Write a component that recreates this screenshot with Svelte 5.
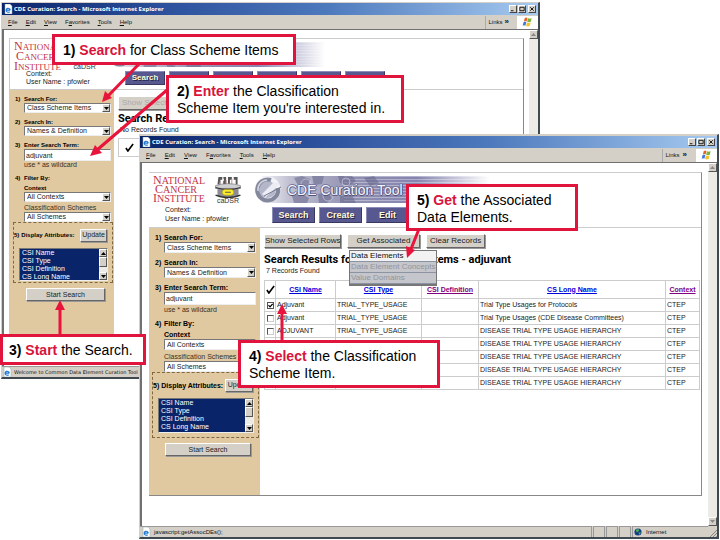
<script>
  const title = 'CDE Curation: Search - Microsoft Internet Explorer';
  const menus = ['File', 'Edit', 'View', 'Favorites', 'Tools', 'Help'];
  const nav = ['Search', 'Create', 'Edit', 'Options', 'Help', 'Logout'];
  const attributes = ['CSI Name', 'CSI Type', 'CSI Definition', 'CS Long Name'];
  const hierarchy = 'DISEASE TRIAL TYPE USAGE HIERARCHY';
  const rows = [
    { name: 'Adjuvant', long: 'Trial Type Usages for Protocols', checked: true },
    { name: 'Adjuvant', long: 'Trial Type Usages (CDE Disease Committees)' },
    { name: 'ADJUVANT', long: hierarchy },
    { name: 'ADJUVANT', long: hierarchy },
    { name: 'ADJUVANT', long: hierarchy },
    { name: 'ADJUVANT', long: hierarchy },
    { name: 'ADJUVANT', long: hierarchy }
  ];
</script>

{#snippet ieIcon()}
  <svg class="ie" viewBox="0 0 9 10" aria-hidden="true">
    <path d="M1 0h5l2 2v8H1z" fill="#fff" stroke="#8aa" stroke-width=".5" />
    <path d="M6.2 6.2H2.4M6.2 6.2A2 2 0 1 0 5.6 7.7" fill="none" stroke="#1c78d0" stroke-width="1.2" />
  </svg>
{/snippet}

{#snippet tick()}
  <svg class="tick" viewBox="0 0 10 10" aria-label="Select all"><path d="M1 5.5l2.2 3.4L9 1" fill="none" stroke="#000" stroke-width="1.8" /></svg>
{/snippet}

{#snippet dropdown(id, value)}
  <div class="drop">
    <select {id}><option>{value}</option></select>
    <span class="arrow"><svg viewBox="0 0 5 3"><path d="M0 0h5L2.5 3z" /></svg></span>
  </div>
{/snippet}

{#snippet banner()}
  <div class="banner">
    <svg class="art" viewBox="0 0 236 27" preserveAspectRatio="none" aria-hidden="true">
      <defs>
        <linearGradient id="fade">
          <stop offset="0" stop-color="#f2f2f8" />
          <stop offset=".12" stop-color="#c0c0d2" />
          <stop offset=".4" stop-color="#9090b2" />
          <stop offset=".68" stop-color="#8484b0" />
          <stop offset="1" stop-color="#fff" />
        </linearGradient>
        <pattern id="lines" width="4" height="3" patternUnits="userSpaceOnUse"><path d="M0 .5h4" stroke="#fff" stroke-opacity=".35" /></pattern>
      </defs>
      <path d="M8 0h228v27H8z" fill="url(#fade)" />
      <path d="M90 0h146v27H90z" fill="url(#lines)" />
      <g fill="#66668c" opacity=".55">
        <path d="M40 2l8-2 8 3-2 7-9 1zM58 0h12l-2 8-8 1zM84 0h14l4 5-7 5-9-3zM110 2l10-2 5 7-9 3z" />
        <path d="M38 20l9-3 8 5-2 5H40zM64 18l9-2 5 6-5 5h-8zM86 20l12-1 4 8H86z" />
      </g>
      <g fill="none" stroke="#d8d8e8" opacity=".6"><circle cx="52" cy="8" r="5" /><circle cx="74" cy="20" r="5" /><circle cx="92" cy="6" r="4" /></g>
      <circle cx="13.500" cy="13.500" r="13" fill="#f4f4f8" />
      <circle cx="13.500" cy="13.500" r="8.500" fill="#b4b6ca" />
      <path d="M17 4A10.500 10.500 0 1 0 24 12" fill="none" stroke="#84889c" stroke-width="4" />
      <path d="M8 18L20 6l6 2-14 13z" fill="#ececf4" />
      <path d="M10 20L27 11" stroke="#74788c" />
      <path d="M4 15a9.500 9.500 0 0 1 9-11" fill="none" stroke="#d0d2de" stroke-width="1.500" />
    </svg>
    <strong>CDE Curation Tool</strong>
  </div>
{/snippet}

{#snippet masthead()}
  <header class="mast">
    <div class="identity">
      <div class="logos">
        <div class="nci"><span><b>N</b>ATIONAL</span><span class="mid"><b>C</b>ANCER</span><span><b>I</b>NSTITUTE</span></div>
        <div class="cadsr">
          <svg viewBox="0 0 28 23" aria-hidden="true">
            <path d="M4 1h4v3H6v5H3zM9 1h3v8H9V5h1zM14 1h4v3h-2v5h-2zM20 1h4v8h-2V4h-2z" fill="#555" />
            <path d="M5 9l1-4M12 10V4M18 9V3" stroke="#b88" />
            <path d="M1 10q13-4 26 0v3H1z" fill="#cfcfd4" stroke="#777" stroke-width=".7" />
            <path d="M3 13h22v8q-11 4-22 0z" fill="#8c8c94" />
            <path d="M1 12q13 4 26 0" fill="none" stroke="#333" stroke-width="1.300" />
            <path d="M1 20q13 5 26 0" fill="none" stroke="#333" stroke-width="1.500" />
            <rect x="8" y="14" width="12" height="6" rx="3" fill="#ffec2c" stroke="#a89a10" stroke-width=".6" />
            <path d="M11 17h6" stroke="#554" />
          </svg>
          <span>caDSR</span>
        </div>
      </div>
      <p>Context:<br />User Name : pfowler</p>
    </div>
    <div class="brand">
      {@render banner()}
      <nav>{#each nav as item}<button>{item}</button>{/each}</nav>
    </div>
  </header>
{/snippet}

{#snippet sidebar(key)}
  <aside>
    <div class="step">
      <b>1)</b><label for="{key}-for">Search For:</label>
      {@render dropdown(`${key}-for`, 'Class Scheme Items')}
    </div>
    <div class="step">
      <b>2)</b><label for="{key}-in">Search In:</label>
      {@render dropdown(`${key}-in`, 'Names & Definition')}
    </div>
    <div class="step">
      <b>3)</b><label for="{key}-term">Enter Search Term:</label>
      <input id="{key}-term" type="text" value="adjuvant" />
      <small>use * as wildcard</small>
    </div>
    <div class="step">
      <b>4)</b><b>Filter By:</b>
      <label class="sub" for="{key}-ctx">Context</label>
      {@render dropdown(`${key}-ctx`, 'All Contexts')}
      <label class="sub light" for="{key}-cls">Classification Schemes</label>
      {@render dropdown(`${key}-cls`, 'All Schemes')}
    </div>
    <div class="display">
      <div class="row"><b>5)</b><label for="{key}-attr">Display Attributes:</label><button class="btn">Update</button></div>
      <div class="list">
        <select id="{key}-attr" multiple size="4">
          {#each attributes as item}<option selected>{item}</option>{/each}
        </select>
        <span class="bar">
          <span class="arrow"><svg viewBox="0 0 5 3"><path d="M0 3h5L2.5 0z" /></svg></span>
          <span class="arrow thumb"></span>
          <span class="arrow end"><svg viewBox="0 0 5 3"><path d="M0 0h5L2.5 3z" /></svg></span>
        </span>
      </div>
    </div>
    <button class="btn start">Start Search</button>
  </aside>
{/snippet}

{#snippet browser(key, status, main)}
  <section class="window {key}">
    <div class="titlebar">
      {@render ieIcon()}<strong>{title}</strong>
      <button aria-label="Minimize"><svg viewBox="0 0 7 7"><path d="M1 5.5h3" /></svg></button>
      <button aria-label="Maximize"><svg viewBox="0 0 7 7"><path d="M1 1.500h5v4H1z" /></svg></button>
      <button class="close" aria-label="Close"><svg viewBox="0 0 7 7"><path d="M1.500 1.500l4 4m0-4l-4 4" /></svg></button>
    </div>
    <div class="menubar">
      {#each menus as item}
        {@const at = item === 'Favorites' ? 1 : 0}
        <span>{item.slice(0, at)}<u>{item[at] ?? ''}</u>{item.slice(at + 1)}</span>
      {/each}
      <span class="links">Links</span><b>»</b>
      <span class="flag"><svg viewBox="0 0 12 11">
        <path d="M3 1q2-1 3 0L5 5Q3.500 4 2 5z" fill="#e8622c" /><path d="M6.600 1.300q2 1 4 0l-1 4q-2 1-4 0z" fill="#78b43c" />
        <path d="M1.700 5.600q1.600-1 3 0l-1 4q-1.500-1-3 0z" fill="#3c78dc" /><path d="M5.400 6q2 1 4 0l-1 4q-2 1-4 0z" fill="#f4c428" />
      </svg></span>
    </div>
    <div class="viewport">
      <div class="page">
        {@render masthead()}
        <div class="body">{@render sidebar(key)}{@render main()}</div>
      </div>
      <span class="scroll">
        <span class="arrow"><svg viewBox="0 0 5 3"><path d="M0 3h5L2.5 0z" /></svg></span>
        <span class="arrow end"><svg viewBox="0 0 5 3"><path d="M0 0h5L2.5 3z" /></svg></span>
      </span>
    </div>
    <footer>
      <span class="msg">{@render ieIcon()}{status}</span><i></i><i></i><i></i>
      <span class="zone"><svg viewBox="0 0 9 9"><circle cx="4.500" cy="4.500" r="4" fill="#123c8c" /><path d="M2 2l3-1 1 2-3 2zM5 5l3 0-2 3z" fill="#4cb04c" /></svg>Internet</span>
      <svg class="grip" viewBox="0 0 8 8"><path d="M8 1L1 8M8 4L4 8M8 7L7 8" stroke="#888" /></svg>
    </footer>
  </section>
{/snippet}

{#snippet emptyMain()}
  <main>
    <div class="tools"><button class="btn" disabled>Show Selected Rows</button></div>
    <h1>Search Results for Class Scheme Items</h1>
    <p class="count">No Records Found</p>
    <table><thead><tr><th class="pick">{@render tick()}</th><th></th></tr></thead></table>
  </main>
{/snippet}

{#snippet resultsMain()}
  <main>
    <div class="tools">
      <button class="btn wide">Show Selected Rows</button>
      <div class="assoc">
        <button class="btn">Get Associated</button>
        <div class="popup">
          <button>Data Elements</button>
          <button disabled>Data Element Concepts</button>
          <button disabled>Value Domains</button>
        </div>
      </div>
      <button class="btn">Clear Records</button>
    </div>
    <h1>Search Results for Class Scheme Items - adjuvant</h1>
    <p class="count">7 Records Found</p>
    <table>
      <thead>
        <tr>
          <th class="pick">{@render tick()}</th>
          <th class="name"><a href="#name">CSI Name</a></th>
          <th class="type"><a href="#type">CSI Type</a></th>
          <th class="def"><a class="seen" href="#def">CSI Definition</a></th>
          <th><a href="#long">CS Long Name</a></th>
          <th class="ctx"><a class="seen" href="#ctx">Context</a></th>
        </tr>
      </thead>
      <tbody>
        {#each rows as row, i}
          <tr>
            <td class="pick"><input type="checkbox" checked={row.checked} aria-label="Select row {i + 1}" /></td>
            <td>{row.name}</td><td>TRIAL_TYPE_USAGE</td><td></td><td>{row.long}</td><td>CTEP</td>
          </tr>
        {/each}
      </tbody>
    </table>
  </main>
{/snippet}

<div class="desk">
  {@render browser('back', 'Welcome to Common Data Element Curation Tool', emptyMain)}
  {@render browser('front', 'javascript:getAssocDEs();', resultsMain)}

  <p class="note n1"><b>1) <em>Search</em></b> for Class Scheme Items</p>
  <svg class="arrows" width="720" height="540" aria-hidden="true">
    <g stroke="#e8143c" stroke-width="3">
      <path d="M139 64L108 96M167 90L97 150M60 336V308M282 341V311M419 229L411 249" />
    </g>
    <g fill="#e8143c">
      <path d="M102 102l3-11 7 7zM90 156l5-11 7 8zM60 300l-5 10h10zM282 304l-5 10h10zM407 258l-1-12 9 4z" />
    </g>
  </svg>
  <p class="note n2"><b>2) <em>Enter</em></b> the Classification<br />Scheme Item you're interested in.</p>
  <p class="note n3"><b>3) <em>Start</em></b> the Search.</p>
  <p class="note n4"><b>4) <em>Select</em></b> the Classification<br />Scheme Item.</p>
  <p class="note n5"><b>5) <em>Get</em></b> the Associated<br />Data Elements.</p>
</div>

<style>
  .desk, .desk * { box-sizing: border-box; }
  .desk { position: relative; min-height: 100vh; overflow: hidden; background: #fff; color: #222; font: 7px/9px "Liberation Sans", Arial, sans-serif; }
  p, h1 { margin: 0; }
  button, input, select { font: inherit; color: inherit; margin: 0; padding: 0; border-radius: 0; }
  svg { display: block; }

  .window { position: absolute; display: flex; flex-direction: column; background: #d4d0c8; border: 1px solid #d4d0c8; border-right: 2px solid #404850; border-bottom: 2px solid #404850; }
  .back { left: 1px; top: 2px; width: calc(75% - 1px); height: 377px; --line: 8px; --field: 10px; --entry: 12px; --side: 104px; --head: 51px; --label: 6px; --logo: 9px; --nav: 8px; --navw: 40px; --navh: 14px; --banner: 25px; --title: 13px; --art: 218px; --id: 97px; --update: 27px; --list: 33px; --box: 61px; --start: 79px; --gapx: 8px; }
  .front { left: 139px; right: 1px; top: 134px; height: 405px; padding-top: 1px; --line: 9px; --field: 11px; --entry: 13px; --side: 111px; --head: 55px; --label: 7px; --logo: 10px; --nav: 9px; --navw: 43px; --navh: 16px; --banner: 27px; --title: 14px; --art: 236px; --id: 105px; --update: 28px; --list: 35px; --box: 66px; --start: 86px; --gapx: 9px; }

  .titlebar { display: flex; align-items: center; height: 12px; padding: 0 2px; gap: 1px; color: #fff; font-size: 6px; background: linear-gradient(90deg, #0a246a, #2c509c 30%, #4c78bc 60%, #a6caf0); }
  .titlebar strong { flex: 1; white-space: nowrap; font-family: "Open Sans", "Noto Sans", sans-serif; }
  .titlebar button { width: 8px; height: 8px; background: #d4d0c8; border: 1px solid; border-color: #fff #444 #444 #fff; }
  .titlebar button svg { width: 100%; height: 100%; fill: none; stroke: #000; }
  .titlebar .close { margin-left: 1px; }
  .ie { width: 9px; height: 10px; flex: none; }
  .menubar { display: flex; align-items: center; height: 14px; gap: var(--gapx); padding-left: 6px; color: #111; font-size: 6px; }
  .links { margin-left: auto; border-left: 1px solid #aaa; padding-left: 3px; line-height: 13px; }
  .menubar b { margin-left: -6px; font-size: 8px; line-height: 6px; }
  .flag { width: 21px; height: 13px; background: #fff; display: grid; place-items: center; }
  .flag svg { width: 11px; height: 10px; }

  .viewport { flex: 1; min-height: 0; display: flex; background: #fff; border: solid #707070; border-width: 1px 0 0 2px; }
  .page { flex: 1; min-width: 0; margin: 8px 5px 12px 5px; display: flex; flex-direction: column; border: 1px solid #ccc; border-right-color: #888; border-bottom-color: #888; }
  .front .page { margin: 9px 6px 30px 7px; border-left: 0; }
  .scroll { width: 9px; display: flex; flex-direction: column; justify-content: space-between; background: #ecebe6; }
  .scroll .arrow { width: 9px; height: 9px; }
  .scroll svg { fill: #888; }
  footer { height: 11px; display: flex; align-items: stretch; font-size: 6px; color: #111; gap: 1px; }
  footer .msg { flex: 1; display: flex; align-items: center; gap: 3px; padding-left: 2px; border: solid #999; border-width: 1px 1px 0 0; white-space: nowrap; }
  .back footer .msg { font-family: "DejaVu Sans", sans-serif; font-size: 5px; gap: 2px; padding-left: 1px; }
  footer i { width: 12px; border: solid #999; border-width: 1px 1px 0 1px; }
  .zone { width: 76px; display: flex; align-items: center; gap: 4px; border: solid #999; border-width: 1px 0 0 1px; padding-left: 1px; }
  .zone svg { width: 8px; height: 8px; }
  .grip { width: 8px; height: 8px; align-self: end; }

  .mast { display: flex; height: var(--head); padding-top: 3px; border-bottom: 1px solid #ccc; flex: none; }
  .identity { width: var(--id); padding-left: 4px; display: flex; flex-direction: column; justify-content: space-between; }
  .identity p { padding-left: 12px; line-height: var(--line); padding-bottom: 4px; }
  .logos { display: flex; gap: 9px; height: 28px; }
  .nci { font: var(--logo)/9px "Liberation Serif", "Times New Roman", serif; color: #c43444; display: flex; flex-direction: column; white-space: nowrap; }
  .nci b { font-weight: 400; font-size: 12px; line-height: 9px; }
  .mid { padding-left: 2px; }
  .cadsr { width: 28px; text-align: center; font-size: 7px; line-height: 6px; color: #333; }
  .cadsr svg { width: 28px; height: 22px; }
  .brand { flex: 1; min-width: 0; }
  .banner { height: var(--banner); display: grid; align-items: center; width: var(--art); }
  .banner > :global(*) { grid-area: 1 / 1; }
  .art { width: 100%; height: var(--banner); }
  .banner strong { padding-left: 33px; font-size: var(--title); font-weight: 400; line-height: 20px; color: #f4f4ff; white-space: nowrap; position: relative; text-shadow: 1px 0 #505078, -1px 0 #7878a0, 0 1px #505078, 0 -1px #7878a0; }
  nav { display: flex; gap: 4px; padding: 4px 0 0 18px; }
  nav button { width: var(--navw); height: var(--navh); border: 1px solid #8c8cb8; border-right-color: #383860; border-bottom-color: #383860; background: #585890; color: #fffbd8; font-size: var(--nav); font-weight: 700; line-height: 12px; text-shadow: 1px 1px #222244; }

  .body { display: flex; flex: 1; min-height: 0; }
  aside { width: var(--side); padding-top: 5px; background: #e0c8a0; flex: none; overflow: hidden; }
  .step { display: grid; grid-template-columns: 9px 1fr; padding: 0 4px 0 6px; margin-bottom: 5px; line-height: var(--line); font-size: var(--label); font-weight: 700; color: #000; }
  .back .step { padding-right: 3px; padding-left: 5px; }
  .step > :global(.drop), .step input, .step small, .sub { grid-column: 2; }
  .sub { margin-top: 2px; }
  .light, .step small { font-size: 7px; font-weight: 400; color: #3c3020; white-space: nowrap; }
  .step input { width: 100%; height: var(--entry); }
  .step input, .drop, .list { border: 1px solid; border-color: #777 #eee #eee #777; background: #fff; font-size: 7px; font-weight: 400; color: #222; min-width: 0; padding-left: 1px; outline: 0; }
  .drop { display: flex; height: var(--field); }
  .drop select { flex: 1; min-width: 0; appearance: none; border: 0; background: none; height: 100%; line-height: 8px; padding: 0 1px; outline: 0; }
  .arrow { display: grid; place-items: center; width: 8px; background: #d4d0c8; border: 1px solid; border-color: #fff #555 #555 #fff; flex: none; }
  .arrow svg { width: 5px; height: 3px; }
  .display { height: var(--box); margin: 0 1px 0 3px; border: 1px dashed #806840; color: #000; }
  .step + .display { margin-top: -5px; }
  .row { display: flex; align-items: center; gap: 2px; height: 24px; font-weight: 700; font-size: var(--label); white-space: nowrap; }
  .row .btn { width: var(--update); margin-left: auto; margin-right: 5px; font-weight: 400; }
  .list { display: flex; height: var(--list); margin: 1px 4px 0 5px; padding: 0; }
  .list select { flex: 1; min-width: 0; height: 100%; border: 0; background: #0a246a; overflow: hidden; outline: 0; scrollbar-width: none; }
  .list option { padding: 0 2px; min-height: 8px; line-height: 8px; font-size: 7px; background-image: linear-gradient(#0a246a, #0a246a); -webkit-text-fill-color: #fff; }
  .bar { display: flex; flex-direction: column; background: #ecebe6; }
  .bar .arrow { height: 8px; }
  .bar .thumb { height: 10px; }
  .end { margin-top: auto; }
  .btn { height: 13px; border: 1px solid; border-color: #fff #666 #666 #fff; background: #d4d0c8; box-shadow: 1px 1px #999; color: #222; font-size: 7px; line-height: 10px; white-space: nowrap; }
  .start { display: block; width: var(--start); margin: 5px 0 0 16px; }

  main { flex: 1; min-width: 0; padding: 6px 1px 0 4px; }
  .tools { display: flex; gap: 6px; }
  .tools .btn { height: 14px; font-size: 8px; padding: 0 3px; }
  .tools .wide { padding: 0; width: 77px; }
  .tools .btn:disabled { color: #aaa; }
  .assoc { position: relative; width: 73px; }
  .assoc .btn { width: 100%; }
  .popup { position: absolute; left: 2px; top: 16px; width: 88px; background: #c4c6cc; border: 1px solid #777; border-right-width: 2px; border-bottom-width: 2px; display: grid; }
  .popup button { height: 11px; border: 0; border-bottom: 1px solid #8c94a4; background: #f2f2f2; text-align: left; font-size: 8px; line-height: 10px; white-space: nowrap; color: #111; padding-left: 1px; }
  .popup button:disabled { background: #c4c6cc; color: #93959a; }
  h1 { font: bold 11px/14px Roboto, "Liberation Sans", sans-serif; margin-top: 5px; color: #000; white-space: nowrap; }
  .count { line-height: 8px; padding-left: 2px; }
  .back h1 { line-height: 12px; margin-top: 3px; }
  .back .count { line-height: 10px; }
  table { width: 100%; margin-top: 5px; border-collapse: collapse; table-layout: fixed; }
  .back table { margin-top: 3px; width: 46px; }
  th, td { border: 1px solid #ccc; padding: 0 1px; height: 13px; line-height: 8px; text-align: left; white-space: nowrap; }
  th { height: 18px; text-align: center; }
  .pick { width: 11px; }
  .back .pick { width: 22px; }
  .name { width: 60px; }
  .type { width: 86px; }
  .def { width: 57px; }
  .ctx { width: 34px; }
  th a { color: #0000dd; }
  th .seen { color: #800080; }
  .tick { width: 9px; height: 9px; margin: auto; }
  td input { display: block; appearance: none; width: 7px; height: 7px; margin: auto; border: 1px solid; border-color: #555 #ccc #ccc #555; background: #fff; }
  td input:checked { background: #fff url("data:image/svg+xml,%3Csvg xmlns='http://www.w3.org/2000/svg' viewBox='0 0 5 5'%3E%3Cpath d='M.5 2.200l1.500 1.600L4.600 1' fill='none' stroke='%23000' stroke-width='1.200'/%3E%3C/svg%3E"); border-color: #555; }

  .arrows { position: absolute; left: 0; top: 0; pointer-events: none; }
  .note { position: absolute; padding: 5px 8px; border: 3px solid #e0143c; background: #fff; color: #000; font-size: 14px; line-height: 17px; white-space: nowrap; }
  .note em { font-style: normal; color: #d8143c; }
  .n1 { left: 52px; top: 34px; width: 244px; height: 31px; }
  .n2 { left: 166px; top: 75px; width: 238px; height: 48px; }
  .n3 { left: 0; top: 334px; width: 146px; height: 31px; padding-left: 6px; }
  .n4 { left: 238px; top: 340px; width: 202px; height: 48px; }
  .n5 { left: 406px; top: 184px; width: 172px; height: 47px; }
</style>
